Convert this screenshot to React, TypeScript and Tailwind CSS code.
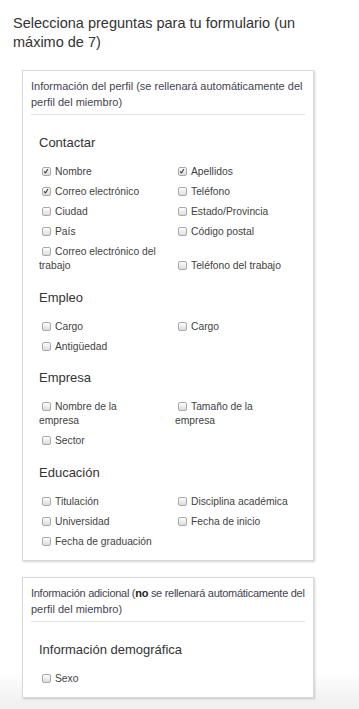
import type { ReactNode } from "react"

type Item = { label: string; checked?: boolean }

type Section = { title: string; items: Item[] }

const profileSections: Section[] = [
  {
    title: "Contactar",
    items: [
      { label: "Nombre", checked: true },
      { label: "Apellidos", checked: true },
      { label: "Correo electrónico", checked: true },
      { label: "Teléfono" },
      { label: "Ciudad" },
      { label: "Estado/Provincia" },
      { label: "País" },
      { label: "Código postal" },
      { label: "Correo electrónico del trabajo" },
      { label: "Teléfono del trabajo" },
    ],
  },
  {
    title: "Empleo",
    items: [{ label: "Cargo" }, { label: "Cargo" }, { label: "Antigüedad" }],
  },
  {
    title: "Empresa",
    items: [{ label: "Nombre de la empresa" }, { label: "Tamaño de la empresa" }, { label: "Sector" }],
  },
  {
    title: "Educación",
    items: [
      { label: "Titulación" },
      { label: "Disciplina académica" },
      { label: "Universidad" },
      { label: "Fecha de inicio" },
      { label: "Fecha de graduación" },
    ],
  },
]

const extraSections: Section[] = [{ title: "Información demográfica", items: [{ label: "Sexo" }] }]

function Checkbox({ checked }: { checked?: boolean }) {
  return (
    <span className="relative inline-block w-[9px] h-[9px] ml-[3px] mr-[4px] align-[-1px] rounded-[2px] border border-[#a9a9a9] bg-linear-to-b from-[#fdfdfd] to-[#dcdcdc]">
      {checked && (
        <svg viewBox="0 0 9 9" className="absolute inset-0 w-[7px] h-[7px]">
          <path d="M1.3 4.3 L3.2 6.2 L6.4 1.2" fill="none" stroke="#3a3a3a" strokeWidth="1.4" />
        </svg>
      )}
    </span>
  )
}

function Card({ header, sections }: { header: ReactNode; sections: Section[] }) {
  return (
    <div className="bg-white border border-[#d9d9d9] shadow-[1px_1px_2px_rgba(0,0,0,0.18)]">
      <div className="px-2 pt-[7px]">
        <p className="text-[11px] leading-[16px] text-[#45434f] whitespace-nowrap">{header}</p>
        <div className="mt-1 h-px bg-[#e3e3e3]" />
      </div>
      <div className="pl-4 pt-5 pb-[11px] flex flex-col gap-[16.5px]">
        {sections.map((s) => (
          <div key={s.title}>
            <h3 className="text-[13px] leading-[16px] text-[#333] mb-[14px]">{s.title}</h3>
            <div className="grid grid-cols-[118px_118px] gap-x-[18px] gap-y-[6px] items-end">
              {s.items.map((it, i) => (
                <label key={i} className="block text-[10.3px] leading-[14px] text-[#3f3f3f]">
                  <Checkbox checked={it.checked} />
                  {it.label}
                </label>
              ))}
            </div>
          </div>
        ))}
      </div>
    </div>
  )
}

export default function App() {
  return (
    <div
      className="min-h-[709px] bg-linear-to-b from-white from-[94%] to-[#ececec] pt-[14px] pb-4"
      style={{ fontFamily: '"Liberation Sans", Arial, sans-serif' }}
    >
      <h1 className="px-[13px] text-[14.5px] leading-[19px] text-[#333]">
        Selecciona preguntas para tu formulario (un máximo de 7)
      </h1>
      <div className="mt-[18px] ml-[22px] w-[292px] flex flex-col gap-[16px]">
        <Card
          header={
            <>
              Información del perfil (se rellenará automáticamente del
              <br />
              perfil del miembro)
            </>
          }
          sections={profileSections}
        />
        <Card
          header={
            <>
              <span className="tracking-[-0.28px]">
                Información adicional (<b className="font-bold text-[#222]">no</b> se rellenará automáticamente del
              </span>
              <br />
              perfil del miembro)
            </>
          }
          sections={extraSections}
        />
      </div>
    </div>
  )
}
